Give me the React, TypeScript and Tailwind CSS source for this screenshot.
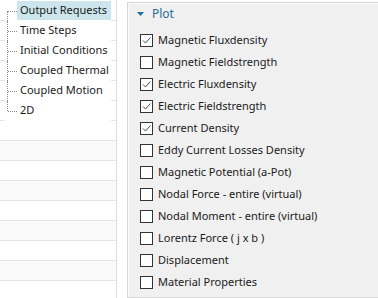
import React from 'react';

const treeItems = ['Output Requests', 'Time Steps', 'Initial Conditions', 'Coupled Thermal', 'Coupled Motion', '2D'];

const plotItems: { label: string; checked: boolean }[] = [
  { label: 'Magnetic Fluxdensity', checked: true },
  { label: 'Magnetic Fieldstrength', checked: false },
  { label: 'Electric Fluxdensity', checked: true },
  { label: 'Electric Fieldstrength', checked: true },
  { label: 'Current Density', checked: true },
  { label: 'Eddy Current Losses Density', checked: false },
  { label: 'Magnetic Potential (a-Pot)', checked: false },
  { label: 'Nodal Force - entire (virtual)', checked: false },
  { label: 'Nodal Moment - entire (virtual)', checked: false },
  { label: 'Lorentz Force ( j x b )', checked: false },
  { label: 'Displacement', checked: false },
  { label: 'Material Properties', checked: false },
];

const TreeRow: React.FC<{ label: string; index: number; last: boolean }> = ({ label, index, last }) => {
  const selected = index === 0;
  return (
    <div className="flex h-5">
      <div className="w-[5px] border-b border-[#e6e6e6]" />
      <div className="flex flex-1 min-w-0">
        {/* tree connector */}
        <div className="relative w-[12px] shrink-0">
          <span
            className={`absolute left-[2px] w-0 border-l border-dotted border-[#8c8c8c] ${
              index === 0 ? 'top-[10px] bottom-0' : last ? 'top-0 h-[10px]' : 'top-0 bottom-0'
            }`}
          />
          <span className="absolute left-[3px] top-[10px] w-[9px] h-0 border-t border-dotted border-[#8c8c8c]" />
        </div>
        <div
          className={`flex items-center h-[19px] pl-[3px] pr-[3px] whitespace-nowrap ${
            selected ? 'bg-[#cde6ee] flex-1' : ''
          }`}
        >
          {label}
        </div>
      </div>
      <div className="w-[5px] border-b border-[#e6e6e6]" />
    </div>
  );
};

const CheckBox: React.FC<{ checked: boolean }> = ({ checked }) => (
  <div className="w-[13px] h-[13px] border border-[#333333] bg-white flex items-center justify-center shrink-0">
    {checked && (
      <svg width="11" height="11" viewBox="0 0 11 11">
        <polyline points="2,5.5 4.5,8 9.5,2.5" fill="none" stroke="#4a4a4a" strokeWidth="1" />
      </svg>
    )}
  </div>
);

export default function App() {
  const emptyRows = Array.from({ length: 9 }, (_, i) => i + 6);
  return (
    <div
      className="w-[378px] h-[298px] overflow-hidden bg-white flex text-[11px] text-[#1a1a1a]"
      style={{ fontFamily: '"Noto Sans", "Open Sans", sans-serif' }}
    >
      {/* left tree grid */}
      <div className="w-[117px] shrink-0 border-r border-[#dcdcdc] pt-px">
        {treeItems.map((t, i) => (
          <TreeRow key={t} label={t} index={i} last={i === treeItems.length - 1} />
        ))}
        {emptyRows.map((r) => (
          <div key={r} className={`h-5 border-b border-[#e6e6e6] ${r % 2 === 1 ? 'bg-[#f9f9f9]' : 'bg-white'}`} />
        ))}
      </div>

      {/* right panel */}
      <div className="flex-1 ml-[10px] mt-[2px] -mr-4 border border-[#d6d6d6] bg-[#f0f0f0] shadow-[inset_1px_1px_0_#fafafa] pt-[1px]">
        <div className="flex items-center h-5 pl-[9px] gap-[8px]">
          <svg width="7" height="4" viewBox="0 0 7 4">
            <polygon points="0,0 7,0 3.5,4" fill="#1f6fa0" />
          </svg>
          <span className="text-[#2a6d9c] text-[12px]">Plot</span>
        </div>
        <div className="mt-[5px] pl-[12px]">
          {plotItems.map((p) => (
            <div key={p.label} className="flex items-center h-[22px] gap-[5px]">
              <CheckBox checked={p.checked} />
              <span>{p.label}</span>
            </div>
          ))}
        </div>
      </div>
    </div>
  );
}
